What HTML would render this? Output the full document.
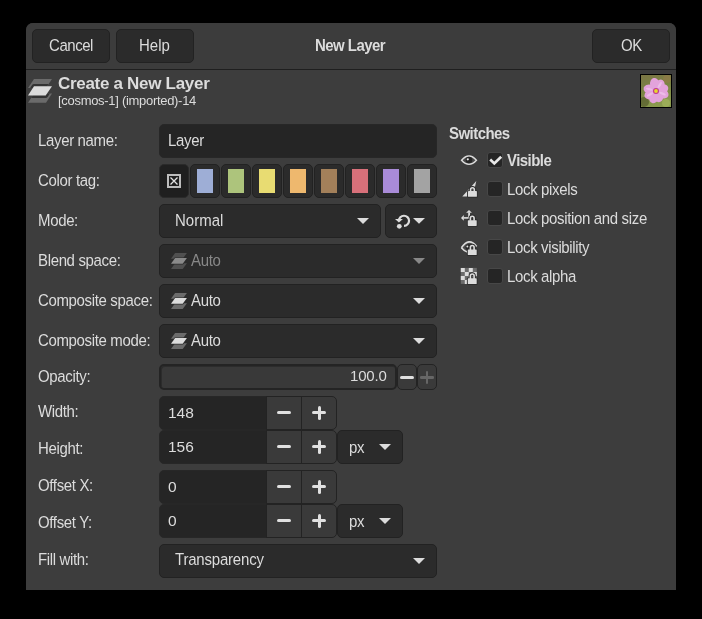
<!DOCTYPE html>
<html><head><meta charset="utf-8">
<style>
html,body{margin:0;padding:0;background:#000;width:702px;height:619px;overflow:hidden;}
#root{position:absolute;left:0;top:0;width:702px;height:619px;transform:translateZ(0);will-change:transform;}
body{-webkit-font-smoothing:antialiased;position:relative;font-family:"Liberation Sans",sans-serif;font-size:14px;color:#dcdcdc;}
.a{position:absolute;}
#dlg{left:26px;top:23px;width:650px;height:567px;background:#3d3d3d;border-radius:7px 7px 0 0;}
#hdr{left:26px;top:23px;width:650px;height:46px;border-radius:7px 7px 0 0;background:#3c3c3c;}
#sep{left:26px;top:69px;width:650px;height:1px;background:#1f1f1f;}
.btn{background:#2b2b2b;border:1px solid #222;border-radius:5px;box-sizing:border-box;}
.t{position:absolute;white-space:nowrap;line-height:16px;font-size:15px;letter-spacing:-0.35px;transform:scaleY(1.05);transform-origin:0 13.5px;}
.ent{background:#252525;border-radius:5px;box-sizing:border-box;border:1px solid #272727;}
.cmb{background:#2b2b2b;border-radius:5px;box-sizing:border-box;border:1px solid #222;}
.lbl{left:38px;}
.arr{width:0;height:0;border-left:6px solid transparent;border-right:6px solid transparent;border-top:6px solid #dcdcdc;}
.ctb{top:164px;width:29.6px;height:34px;background:#2b2b2b;border:1px solid #222;border-radius:5px;box-sizing:border-box;}
.sw{position:absolute;left:6px;top:4px;width:16px;height:24px;}
.chk{left:487px;width:15.5px;height:15.5px;background:#252525;border:1px solid #474747;border-radius:3px;box-sizing:border-box;}
.sbtn{background:#3a3a3a;border:1px solid #232323;box-sizing:border-box;}
</style></head><body><div id="root">
<div id="dlg" class="a"></div>
<div id="hdr" class="a"></div>
<div id="sep" class="a"></div>

<!-- header buttons -->
<div class="a btn" style="left:32px;top:29px;width:78px;height:34px;"></div>
<div class="t" style="left:49px;top:38px;letter-spacing:-0.45px;">Cancel</div>
<div class="a btn" style="left:116px;top:29px;width:78px;height:34px;"></div>
<div class="t" style="left:139px;top:38px;letter-spacing:0px;">Help</div>
<div class="t" style="left:315px;top:38px;font-weight:bold;letter-spacing:-0.55px;">New Layer</div>
<div class="a btn" style="left:592px;top:29px;width:78px;height:34px;"></div>
<div class="t" style="left:621px;top:38px;">OK</div>

<!-- title area -->
<svg class="a" style="left:24px;top:72px" width="32" height="34" viewBox="0 0 32 34">
  <defs><clipPath id="lc"><polygon points="10,7 28,7 22,16 4,16"/><polygon points="10,21.5 28,21.5 22,30.7 4,30.7"/></clipPath></defs>
  <polygon points="10,7 28,7 22,16 4,16" fill="#6b6b6b"/>
  <polygon points="10,21.5 28,21.5 22,30.7 4,30.7" fill="#6b6b6b"/>
  <polygon points="10,14.2 28,14.2 21.7,23.6 4,23.6" fill="#333" stroke="#333" stroke-width="4.6" stroke-linejoin="round" clip-path="url(#lc)"/>
  <polygon points="10,14.2 28,14.2 21.7,23.6 4,23.6" fill="#dcdcdc"/>
</svg>
<div class="t" style="left:58px;top:75px;font-weight:bold;font-size:17px;letter-spacing:-0.3px;line-height:18px;transform:none;">Create a New Layer</div>
<div class="t" style="left:58px;top:94px;font-size:13px;letter-spacing:-0.3px;line-height:14px;">[cosmos-1] (imported)-14</div>
<div class="a" style="left:640px;top:74px;width:32px;height:34px;background:#000;"></div>
<svg class="a" style="left:641px;top:75px" width="30" height="32" viewBox="0 0 30 32">
  <defs><linearGradient id="tg" x1="0" y1="0" x2="0.3" y2="1"><stop offset="0" stop-color="#7a7444"/><stop offset="0.5" stop-color="#7a8444"/><stop offset="1" stop-color="#8a9a4e"/></linearGradient></defs>
  <rect width="30" height="32" fill="url(#tg)"/>
  <circle cx="3" cy="27" r="5" fill="#4e5428" opacity="0.6"/>
  <circle cx="26" cy="4" r="4" fill="#9a7a4a" opacity="0.5"/>
  <circle cx="25" cy="28" r="4" fill="#a8bb60" opacity="0.6"/>
  <ellipse cx="13.87" cy="9.60" rx="6.76" ry="4.8" transform="rotate(-100 13.87 9.60)" fill="#e3a3dc"/><ellipse cx="18.31" cy="10.70" rx="6.50" ry="4.8" transform="rotate(-58 18.31 10.70)" fill="#e3a3dc"/><ellipse cx="20.94" cy="14.07" rx="6.50" ry="4.8" transform="rotate(-18 20.94 14.07)" fill="#e3a3dc"/><ellipse cx="21.03" cy="18.43" rx="6.76" ry="4.8" transform="rotate(22 21.03 18.43)" fill="#e3a3dc"/><ellipse cx="17.15" cy="21.33" rx="5.98" ry="4.8" transform="rotate(68 17.15 21.33)" fill="#e3a3dc"/><ellipse cx="13.07" cy="21.94" rx="6.50" ry="4.8" transform="rotate(108 13.07 21.94)" fill="#e3a3dc"/><ellipse cx="9.59" cy="19.12" rx="6.50" ry="4.8" transform="rotate(150 9.59 19.12)" fill="#e3a3dc"/><ellipse cx="8.96" cy="14.38" rx="6.50" ry="4.8" transform="rotate(195 8.96 14.38)" fill="#e3a3dc"/>
  <ellipse cx="18.71" cy="10.06" rx="3.5" ry="1.2" transform="rotate(-58 18.71 10.06)" fill="#eec0ea" opacity="0.8"/><ellipse cx="21.49" cy="18.62" rx="3.5" ry="1.2" transform="rotate(22 21.49 18.62)" fill="#eec0ea" opacity="0.8"/><ellipse cx="8.94" cy="19.50" rx="3.5" ry="1.2" transform="rotate(150 8.94 19.50)" fill="#eec0ea" opacity="0.8"/><ellipse cx="8.24" cy="14.19" rx="3.5" ry="1.2" transform="rotate(195 8.24 14.19)" fill="#eec0ea" opacity="0.8"/>
  <circle cx="15" cy="16" r="3" fill="#c0388e"/>
  <circle cx="15" cy="16" r="1.9" fill="#e6d92a"/>
</svg>

<!-- labels -->
<div class="t lbl" style="top:133px;">Layer name:</div>
<div class="t lbl" style="top:173px;">Color tag:</div>
<div class="t lbl" style="top:213px;">Mode:</div>
<div class="t lbl" style="top:253px;">Blend space:</div>
<div class="t lbl" style="top:293px;">Composite space:</div>
<div class="t lbl" style="top:333px;">Composite mode:</div>
<div class="t lbl" style="top:369px;">Opacity:</div>
<div class="t lbl" style="top:404px;">Width:</div>
<div class="t lbl" style="top:441px;">Height:</div>
<div class="t lbl" style="top:478px;">Offset X:</div>
<div class="t lbl" style="top:515px;">Offset Y:</div>
<div class="t lbl" style="top:552px;">Fill with:</div>

<!-- layer name -->
<div class="a ent" style="left:159px;top:124px;width:278px;height:34px;"></div>
<div class="t" style="left:168px;top:133px;">Layer</div>

<!-- color tags -->
<div class="a ctb" style="left:159px;background:#1f1f1f;border-color:#2a2a2a;"></div>
<svg class="a" style="left:167px;top:174px" width="14" height="14" viewBox="0 0 14 14">
  <rect x="1" y="1" width="12" height="12" fill="none" stroke="#bdbdbd" stroke-width="2"/>
  <path d="M3.5,3.5 L10.5,10.5 M10.5,3.5 L3.5,10.5" stroke="#e2e2e2" stroke-width="1.3"/>
</svg>
<div class="a ctb" style="left:190px;"><div class="sw" style="background:#9eaed6"></div></div>
<div class="a ctb" style="left:221px;"><div class="sw" style="background:#adc47c"></div></div>
<div class="a ctb" style="left:252px;"><div class="sw" style="background:#e8dc72"></div></div>
<div class="a ctb" style="left:283px;"><div class="sw" style="background:#eeb86e"></div></div>
<div class="a ctb" style="left:314px;"><div class="sw" style="background:#a3805a"></div></div>
<div class="a ctb" style="left:345px;"><div class="sw" style="background:#d8707a"></div></div>
<div class="a ctb" style="left:376px;"><div class="sw" style="background:#a98bd8"></div></div>
<div class="a ctb" style="left:407px;"><div class="sw" style="background:#a3a3a3"></div></div>

<!-- mode -->
<div class="a cmb" style="left:159px;top:204px;width:222px;height:34px;"></div>
<div class="t" style="left:175px;top:213px;letter-spacing:0;">Normal</div>
<div class="a arr" style="left:357px;top:218px;"></div>
<div class="a cmb" style="left:385px;top:204px;width:52px;height:34px;"></div>
<svg class="a" style="left:390px;top:208px" width="40" height="26" viewBox="0 0 40 26">
  <path d="M8.95,13.0 A5.05,5.05 0 1 1 14,17.85" fill="none" stroke="#dcdcdc" stroke-width="2.2"/>
  <polygon points="5.0,11.1 12.9,11.1 8.9,14.5" fill="#dcdcdc"/>
  <circle cx="9.3" cy="18.3" r="2.4" fill="#dcdcdc"/>
  <polygon points="23,10 35,10 29,15.8" fill="#dcdcdc"/>
</svg>

<!-- blend space -->
<div class="a cmb" style="left:159px;top:244px;width:278px;height:34px;"></div>
<svg class="a" style="left:166px;top:248px" width="24" height="24" viewBox="0 0 24 24">
  <polygon points="9.1,5 20.9,5 16.7,10.7 5,10.7" fill="#505050"/>
  <polygon points="9.1,15.2 20.9,15.2 16.7,20.9 5,20.9" fill="#505050"/>
  <polygon points="9.1,10.1 20.9,10.1 16.7,15.7 5,15.7" fill="#8a8a8a" stroke="#2b2b2b" stroke-width="1.4"/>
  <polygon points="9.1,10.1 20.9,10.1 16.7,15.7 5,15.7" fill="#8a8a8a"/>
</svg>
<div class="t" style="left:191px;top:253px;color:#888;">Auto</div>
<div class="a arr" style="left:413px;top:258px;border-top-color:#888;"></div>
<!-- composite space -->
<div class="a cmb" style="left:159px;top:284px;width:278px;height:34px;"></div>
<svg class="a" style="left:166px;top:288px" width="24" height="24" viewBox="0 0 24 24">
  <polygon points="9.1,5 20.9,5 16.7,10.7 5,10.7" fill="#6b6b6b"/>
  <polygon points="9.1,15.2 20.9,15.2 16.7,20.9 5,20.9" fill="#6b6b6b"/>
  <polygon points="9.1,10.1 20.9,10.1 16.7,15.7 5,15.7" fill="#dcdcdc" stroke="#2b2b2b" stroke-width="1.4"/>
  <polygon points="9.1,10.1 20.9,10.1 16.7,15.7 5,15.7" fill="#dcdcdc"/>
</svg>
<div class="t" style="left:191px;top:293px;">Auto</div>
<div class="a arr" style="left:413px;top:298px;"></div>
<!-- composite mode -->
<div class="a cmb" style="left:159px;top:324px;width:278px;height:34px;"></div>
<svg class="a" style="left:166px;top:328px" width="24" height="24" viewBox="0 0 24 24">
  <polygon points="9.1,5 20.9,5 16.7,10.7 5,10.7" fill="#6b6b6b"/>
  <polygon points="9.1,15.2 20.9,15.2 16.7,20.9 5,20.9" fill="#6b6b6b"/>
  <polygon points="9.1,10.1 20.9,10.1 16.7,15.7 5,15.7" fill="#dcdcdc" stroke="#2b2b2b" stroke-width="1.4"/>
  <polygon points="9.1,10.1 20.9,10.1 16.7,15.7 5,15.7" fill="#dcdcdc"/>
</svg>
<div class="t" style="left:191px;top:333px;">Auto</div>
<div class="a arr" style="left:413px;top:338px;"></div>

<!-- opacity -->
<div class="a" style="left:159px;top:364px;width:238px;height:26px;background:#393939;border:2px solid #242424;border-radius:5px;box-sizing:border-box;box-shadow:inset 1px 1px 0 #2c2c2c;"></div>
<div class="t" style="left:350px;top:368px;font-size:15px;letter-spacing:-0.2px;transform:none;">100.0</div>
<div class="a sbtn" style="left:397px;top:364px;width:20px;height:26px;border-radius:5px;"></div>
<div class="a sbtn" style="left:417px;top:364px;width:20px;height:26px;border-radius:5px;"></div>

<!-- width -->
<div class="a ent" style="left:159px;top:396px;width:108px;height:34px;border-radius:5px 0 0 5px;"></div>
<div class="t" style="left:168px;top:405px;font-size:15.5px;letter-spacing:0;transform:none;">148</div>
<div class="a sbtn" style="left:266px;top:396px;width:36px;height:34px;"></div>
<div class="a sbtn" style="left:301px;top:396px;width:36px;height:34px;border-radius:0 5px 5px 0;"></div>
<!-- height -->
<div class="a ent" style="left:159px;top:430px;width:108px;height:34px;border-radius:5px 0 0 5px;"></div>
<div class="t" style="left:168px;top:439px;font-size:15.5px;letter-spacing:0;transform:none;">156</div>
<div class="a sbtn" style="left:266px;top:430px;width:36px;height:34px;"></div>
<div class="a sbtn" style="left:301px;top:430px;width:36px;height:34px;border-radius:0 5px 5px 0;"></div>
<div class="a cmb" style="left:337px;top:430px;width:66px;height:34px;"></div>
<div class="t" style="left:349px;top:440px;">px</div>
<div class="a arr" style="left:379px;top:444px;"></div>
<!-- offset x -->
<div class="a ent" style="left:159px;top:470px;width:108px;height:34px;border-radius:5px 0 0 5px;"></div>
<div class="t" style="left:168px;top:479px;font-size:15.5px;letter-spacing:0;transform:none;">0</div>
<div class="a sbtn" style="left:266px;top:470px;width:36px;height:34px;"></div>
<div class="a sbtn" style="left:301px;top:470px;width:36px;height:34px;border-radius:0 5px 5px 0;"></div>
<!-- offset y -->
<div class="a ent" style="left:159px;top:504px;width:108px;height:34px;border-radius:5px 0 0 5px;"></div>
<div class="t" style="left:168px;top:513px;font-size:15.5px;letter-spacing:0;transform:none;">0</div>
<div class="a sbtn" style="left:266px;top:504px;width:36px;height:34px;"></div>
<div class="a sbtn" style="left:301px;top:504px;width:36px;height:34px;border-radius:0 5px 5px 0;"></div>
<div class="a cmb" style="left:337px;top:504px;width:66px;height:34px;"></div>
<div class="t" style="left:349px;top:514px;">px</div>
<div class="a arr" style="left:379px;top:518px;"></div>
<!-- fill -->
<div class="a cmb" style="left:159px;top:544px;width:278px;height:34px;"></div>
<div class="t" style="left:175px;top:552px;letter-spacing:-0.2px;">Transparency</div>
<div class="a arr" style="left:413px;top:558px;"></div>

<div class="a" style="left:277px;top:411.0px;width:14px;height:3px;border-radius:1.5px;background:#e0e0e0;"></div>
<div class="a" style="left:312px;top:411.0px;width:14px;height:3px;border-radius:1.5px;background:#e0e0e0;"></div><div class="a" style="left:317.5px;top:405.5px;width:3px;height:14px;border-radius:1.5px;background:#e0e0e0;"></div>
<div class="a" style="left:277px;top:445.0px;width:14px;height:3px;border-radius:1.5px;background:#e0e0e0;"></div>
<div class="a" style="left:312px;top:445.0px;width:14px;height:3px;border-radius:1.5px;background:#e0e0e0;"></div><div class="a" style="left:317.5px;top:439.5px;width:3px;height:14px;border-radius:1.5px;background:#e0e0e0;"></div>
<div class="a" style="left:277px;top:485.0px;width:14px;height:3px;border-radius:1.5px;background:#e0e0e0;"></div>
<div class="a" style="left:312px;top:485.0px;width:14px;height:3px;border-radius:1.5px;background:#e0e0e0;"></div><div class="a" style="left:317.5px;top:479.5px;width:3px;height:14px;border-radius:1.5px;background:#e0e0e0;"></div>
<div class="a" style="left:277px;top:519.0px;width:14px;height:3px;border-radius:1.5px;background:#e0e0e0;"></div>
<div class="a" style="left:312px;top:519.0px;width:14px;height:3px;border-radius:1.5px;background:#e0e0e0;"></div><div class="a" style="left:317.5px;top:513.5px;width:3px;height:14px;border-radius:1.5px;background:#e0e0e0;"></div>
<div class="a" style="left:400px;top:376px;width:14px;height:3px;border-radius:1.5px;background:#e0e0e0;"></div>
<div class="a" style="left:420px;top:376px;width:14px;height:2.5px;border-radius:1.2px;background:#666;"></div><div class="a" style="left:425.8px;top:370.5px;width:2.5px;height:13.5px;border-radius:1.2px;background:#666;"></div>
<!-- switches -->
<div class="t" style="left:449px;top:126px;font-weight:bold;letter-spacing:-0.55px;">Switches</div>
<div class="a chk" style="top:152px;"></div>
<div class="t" style="left:507px;top:153px;font-weight:bold;letter-spacing:-0.55px;">Visible</div>
<div class="a chk" style="top:181px;"></div>
<div class="t" style="left:507px;top:182px;">Lock pixels</div>
<div class="a chk" style="top:210px;"></div>
<div class="t" style="left:507px;top:211px;">Lock position and size</div>
<div class="a chk" style="top:239px;"></div>
<div class="t" style="left:507px;top:240px;">Lock visibility</div>
<div class="a chk" style="top:268px;"></div>
<div class="t" style="left:507px;top:269px;">Lock alpha</div>


<svg class="a" style="left:456px;top:148px" width="26" height="150" viewBox="0 0 26 150">
  <path d="M5.6,12.2 Q13,4.0 20.4,12.2 Q13,20.4 5.6,12.2 Z" fill="#4a4a4a" stroke="#dcdcdc" stroke-width="1.5"/>
  <circle cx="13" cy="12" r="3.3" fill="#262626"/>
  <circle cx="11.8" cy="11.3" r="1.1" fill="#e6e6e6"/>
  <polygon points="20.3,33.0 18.6,40.5 16.5,48.6 6.3,48.6" fill="#dcdcdc"/>
  <path d="M14.60,43.70 V41.55 A1.85,1.85 0 0 1 18.30,41.55 V43.70" fill="none" stroke="#2c2c2c" stroke-width="3.4"/><rect x="11.10" y="42.20" width="10.70" height="7.50" rx="1.2" fill="#2c2c2c"/><rect x="12.00" y="43.10" width="8.9" height="5.7" rx="0.6" fill="#dcdcdc"/><path d="M14.60,43.70 V41.55 A1.85,1.85 0 0 1 18.30,41.55 V43.70" fill="none" stroke="#dcdcdc" stroke-width="1.6"/>
  <polygon points="13,61.9 10.1,64.8 15.9,64.8" fill="#dcdcdc"/>
  <rect x="12.2" y="64.5" width="1.8" height="6" fill="#dcdcdc"/>
  <polygon points="5,69.9 7.8,66.9 7.8,72.8" fill="#dcdcdc"/>
  <rect x="7.5" y="69.1" width="5" height="1.6" fill="#dcdcdc"/>
  <path d="M14.40,72.80 V70.05 A1.85,1.85 0 0 1 18.10,70.05 V72.80" fill="none" stroke="#2c2c2c" stroke-width="3.4"/><rect x="10.90" y="71.30" width="10.70" height="7.50" rx="1.2" fill="#2c2c2c"/><rect x="11.80" y="72.20" width="8.9" height="5.7" rx="0.6" fill="#dcdcdc"/><path d="M14.40,72.80 V70.05 A1.85,1.85 0 0 1 18.10,70.05 V72.80" fill="none" stroke="#dcdcdc" stroke-width="1.6"/>
  <path d="M5.4,99.8 Q13,88.6 20.6,98.6 L18,104 L11.5,104.2 Q8,103.5 5.4,99.8 Z" fill="#4a4a4a"/>
  <path d="M5.4,99.8 Q13,88.6 20.6,98.6" fill="none" stroke="#dcdcdc" stroke-width="1.6"/>
  <path d="M5.4,99.8 Q8.5,103.6 11.8,104.2" fill="none" stroke="#dcdcdc" stroke-width="1.6"/>
  <circle cx="12.6" cy="99.2" r="3" fill="#262626"/>
  <circle cx="11.4" cy="98.6" r="1" fill="#e6e6e6"/>
  <path d="M14.40,102.00 V99.35 A1.85,1.85 0 0 1 18.10,99.35 V102.00" fill="none" stroke="#2c2c2c" stroke-width="3.4"/><rect x="10.90" y="100.50" width="10.70" height="7.50" rx="1.2" fill="#2c2c2c"/><rect x="11.80" y="101.40" width="8.9" height="5.7" rx="0.6" fill="#dcdcdc"/><path d="M14.40,102.00 V99.35 A1.85,1.85 0 0 1 18.10,99.35 V102.00" fill="none" stroke="#dcdcdc" stroke-width="1.6"/>
  <rect x="4.8" y="119.9" width="16" height="16" fill="#6b6b6b"/>
  <path d="M4.8,119.9h4v4h-4z M12.8,119.9h4v4h-4z M8.8,123.9h4v4h-4z M16.8,123.9h4v4h-4z M4.8,127.9h4v4h-4z M12.8,127.9h4v4h-4z M8.8,131.9h4v4h-4z M16.8,131.9h4v4h-4z" fill="#dcdcdc"/>
  <path d="M14.40,130.90 V127.85 A1.85,1.85 0 0 1 18.10,127.85 V130.90" fill="none" stroke="#2c2c2c" stroke-width="3.4"/><rect x="10.90" y="129.40" width="10.70" height="7.50" rx="1.2" fill="#2c2c2c"/><rect x="11.80" y="130.30" width="8.9" height="5.7" rx="0.6" fill="#dcdcdc"/><path d="M14.40,130.90 V127.85 A1.85,1.85 0 0 1 18.10,127.85 V130.90" fill="none" stroke="#dcdcdc" stroke-width="1.6"/>
</svg>
<svg class="a" style="left:487px;top:152px" width="16" height="16" viewBox="0 0 16 16">
  <path d="M3.2,7.6 L7.3,11.4 L14.2,4.7" fill="none" stroke="#e8e8e8" stroke-width="2.7" stroke-linejoin="miter"/>
</svg>
</div></body></html>
